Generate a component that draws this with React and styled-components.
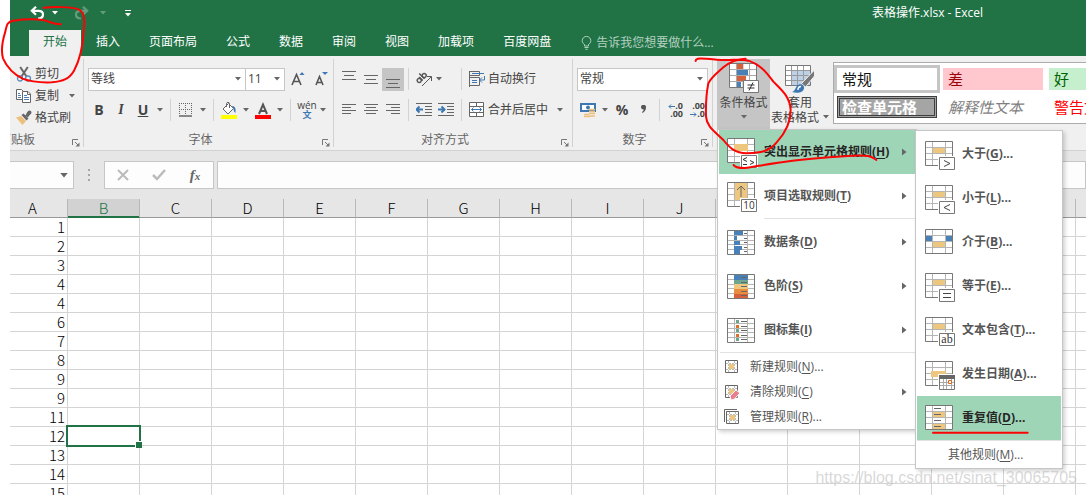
import React from 'react'
import styled, { createGlobalStyle, css } from 'styled-components'

const GlobalStyle = createGlobalStyle`
  * {
    box-sizing: border-box;
  }
  body {
    margin: 0;
    background: #fff;
  }
  body, button, input, select {
    font-family: 'Open Sans', 'Noto Sans CJK SC', sans-serif;
    font-size: 12px;
    line-height: 16px;
    color: #444;
  }
  button {
    margin: 0;
    padding: 0;
    border: 0;
    background: none;
    white-space: nowrap;
  }
  svg {
    display: block;
    flex: none;
  }
`

const Page = styled.div`
  position: relative;
  height: 100vh;
  padding-left: 10px;
  display: flex;
  flex-direction: column;
  overflow: hidden;
`

const Mark = styled.svg`
  position: absolute;
  left: ${(p) => p.$left}px;
  top: ${(p) => p.$top}px;
  z-index: 10;
  fill: none;
  stroke: #fb0404;
  stroke-width: 6;
  stroke-linecap: round;
  stroke-linejoin: round;
  pointer-events: none;
`

const Watermark = styled.div`
  position: absolute;
  right: 9px;
  bottom: 7px;
  z-index: 6;
  font-family: 'Liberation Sans', sans-serif;
  font-size: 16px;
  line-height: 20px;
  color: rgba(190, 190, 190, 0.6);
  pointer-events: none;
`

/* title bar and tabs */

const Header = styled.header`
  flex: none;
  background: #217346;
  color: #fff;
`

const TitleBar = styled.div`
  display: flex;
  align-items: center;
  height: 26px;
  padding: 0 103px 0 18px;
`

const QuickButton = styled.button`
  display: flex;
  align-items: center;
  justify-content: center;
  width: ${(p) => p.$w}px;
  height: 24px;
  color: #fff;
  opacity: ${(p) => (p.disabled ? 0.3 : 1)};
`

const Title = styled.h1`
  margin: 0 0 0 auto;
  font-size: 12px;
  font-weight: normal;
`

const Tabs = styled.nav`
  display: flex;
  align-items: stretch;
  gap: 1px;
  height: 30px;
  padding: 4px 0 0 19px;
`

const Tab = styled.button`
  padding: 0 14px 2px;
  color: ${(p) => (p.$active ? '#217346' : '#fff')};
  background: ${(p) => (p.$active ? '#f0f0f0' : 'transparent')};
`

const TellMe = styled.label`
  display: flex;
  align-items: center;
  gap: 4px;
  padding-left: 15px;
  color: #b3d0c0;
  input {
    width: 160px;
    padding: 0;
    border: 0;
    background: none;
    color: #fff;
  }
  input::placeholder {
    color: #b3d0c0;
    opacity: 1;
  }
`

/* ribbon */

const Ribbon = styled.div`
  flex: none;
  display: flex;
  height: 95px;
  padding-top: 3px;
  background: #f0f0f0;
  border-bottom: 1px solid #d2d2d2;
`

const Group = styled.section`
  position: relative;
  flex: none;
  display: flex;
  flex-direction: column;
  width: ${(p) => p.$w}px;
  height: 88px;
  padding: ${(p) => p.$pad || '8px 0 0 4px'};
  border-right: 1px solid #d2d2d2;
`

const GroupFooter = styled.div`
  display: flex;
  align-items: center;
  justify-content: ${(p) => (p.$clipped ? 'flex-end' : 'center')};
  height: 16px;
  margin: auto 0 -1px;
  padding-right: ${(p) => (p.$clipped ? 48 : 20)}px;
  overflow: hidden;
  white-space: nowrap;
  color: #666;
`

const Launcher = styled.button`
  position: absolute;
  right: 3px;
  bottom: 0;
`

const Row = styled.div`
  display: flex;
  align-items: center;
  height: 24px;
  margin-bottom: ${(p) => p.$below || 0}px;
`

const Tool = styled.button`
  flex: none;
  display: flex;
  align-items: center;
  justify-content: center;
  width: ${(p) => p.$w || 22}px;
  height: 23px;
  background: ${(p) => (p.$on ? '#c5c5c5' : 'transparent')};
`

const TextTool = styled.button`
  display: flex;
  align-items: center;
  gap: ${(p) => p.$gap || 3}px;
  height: 23px;
  padding-left: 7px;
`

const Letter = styled.span`
  font-size: 14px;
  font-weight: bold;
  line-height: 18px;
  ${(p) =>
    p.$italic &&
    css`
      font-family: 'Liberation Serif', serif;
      font-style: italic;
    `}
  ${(p) => p.$underline && 'text-decoration: underline;'}
`

const Sep = styled.span`
  flex: none;
  width: 1px;
  height: 22px;
  margin: 0 ${(p) => p.$m || 0}px 0 ${(p) => p.$before || p.$m || 0}px;
  background: #d2d2d2;
`

const SelectBox = styled.span`
  position: relative;
  display: flex;
  align-items: center;
  width: ${(p) => p.$w}px;
  height: 23px;
  margin-left: ${(p) => (p.$joined ? -1 : 0)}px;
  border: 1px solid #c6c6c6;
  background: #fff;
  select {
    flex: 1;
    min-width: 0;
    height: 21px;
    padding: 0 2px;
    border: 0;
    background: none;
    appearance: none;
  }
  svg {
    margin-right: 4px;
  }
`

const ClipTool = styled.button`
  display: flex;
  align-items: center;
  gap: 3px;
  height: 22px;
  padding-left: 6px;
`

const MarkBox = styled.span`
  padding-left: 7px;
`

const StylesGroup = styled.section`
  flex: 1;
  min-width: 0;
  display: flex;
  align-items: flex-start;
  padding-left: 4px;
`

const BigTool = styled.button`
  display: flex;
  flex-direction: column;
  align-items: center;
  width: ${(p) => p.$w}px;
  height: 70px;
  padding-top: 4px;
  line-height: 14px;
  background: ${(p) => (p.$on ? '#c5c5c5' : 'transparent')};
  svg {
    margin-bottom: 1px;
  }
  span {
    display: flex;
    align-items: center;
    gap: 4px;
    height: 15px;
  }
`

const Anchor = styled.div`
  position: relative;
  flex: none;
`

const Gallery = styled.div`
  flex: 1;
  min-width: 0;
  display: grid;
  grid-template-columns: repeat(3, 100px);
  grid-auto-rows: 22px;
  gap: 6px;
  height: 62px;
  margin: 3px 0 0 3px;
  padding: 5px 0 0 3px;
  overflow: hidden;
  border: 1px solid #ababab;
  border-right: 0;
  background: #fff;
`

const StyleCell = styled.button`
  position: relative;
  padding: 0 5px;
  text-align: left;
  font-size: 15px;
  line-height: 22px;
  color: ${(p) => p.$color};
  background: ${(p) => p.$bg || '#fff'};
  font-style: ${(p) => (p.$italic ? 'italic' : 'normal')};
  ${(p) =>
    p.$selected &&
    css`
      box-shadow: 0 0 0 3px #c5c5c5;
    `}
  ${(p) =>
    p.$check &&
    css`
      padding: 0 2px;
      border: 3px double #3f3f3f;
      font-weight: bold;
      line-height: 16px;
    `}
`

/* menus */

const Menu = styled.div`
  position: absolute;
  left: 0;
  top: 100%;
  z-index: 5;
  width: 200px;
  padding: 0 1px;
  border: 1px solid #c6c6c6;
  background: #fff;
  box-shadow: 2px 2px 4px rgba(0, 0, 0, 0.18);
`

const SubMenu = styled(Menu)`
  left: 197px;
  top: 0;
  width: 148px;
  padding: 1px;
`

const MenuItem = styled.button`
  position: relative;
  display: flex;
  align-items: center;
  width: 100%;
  height: ${(p) => (p.$small ? 25 : 44)}px;
  padding: 0 8px ${(p) => (p.$small ? 0 : 1)}px ${(p) => p.$indent || (p.$small ? 5 : 8)}px;
  gap: ${(p) => (p.$small ? 10 : 5)}px;
  font-weight: ${(p) => (p.$small ? 'normal' : 'bold')};
  color: ${(p) => (p.$active ? '#262626' : '#555')};
  background: ${(p) => (p.$active ? '#9fd5b7' : 'transparent')};
  u {
    text-underline-offset: 2px;
  }
  .arrow {
    margin-left: auto;
  }
`

const MenuLine = styled.hr`
  height: 1px;
  margin: 0 0 1px ${(p) => p.$inset || 0}px;
  border: 0;
  background: #e1e1e1;
`

/* formula bar */

const FormulaBar = styled.div`
  flex: none;
  display: flex;
  height: 48px;
  padding: 10px 0;
  background: #e6e6e6;
`

const Field = styled.div`
  display: flex;
  align-items: center;
  width: ${(p) => (p.$w ? `${p.$w}px` : 'auto')};
  flex: ${(p) => (p.$w ? 'none' : 1)};
  margin-left: ${(p) => p.$gap || 0}px;
  border: 1px solid #c6c6c6;
  border-left-width: ${(p) => (p.$open ? 0 : 1)}px;
  background: #fdfdfd;
  input {
    flex: 1;
    min-width: 0;
    border: 0;
    background: none;
  }
`

const Dots = styled.div`
  display: flex;
  flex-direction: column;
  align-items: center;
  justify-content: center;
  gap: 3px;
  width: 30px;
  i {
    width: 2px;
    height: 2px;
    background: #a6a6a6;
  }
`

const Fx = styled.span`
  font-family: 'Liberation Serif', serif;
  font-size: 15px;
  font-style: italic;
  font-weight: bold;
  color: #666;
  small {
    font-size: 11px;
  }
`

/* sheet */

const SheetArea = styled.main`
  flex: 1;
  min-height: 0;
  overflow: hidden;
`

const Sheet = styled.table`
  width: 1138px;
  table-layout: fixed;
  border-collapse: separate;
  border-spacing: 0;
  font-family: 'Noto Sans CJK SC', sans-serif;
  font-size: 15px;
  font-weight: 300;
  line-height: 18px;
  color: #000;
  th,
  td {
    height: 19px;
    padding: 0;
    white-space: nowrap;
  }
  td {
    position: relative;
    padding-right: 2px;
    text-align: right;
    border-right: 1px solid #d4d4d4;
    border-bottom: 1px solid #d4d4d4;
  }
`

const ColHead = styled.th`
  font-weight: 300;
  background: ${(p) => (p.$active ? '#d2d2d2' : '#e6e6e6')};
  color: ${(p) => (p.$active ? '#217346' : '#000')};
  border-right: 1px solid #b8b8b8;
  border-bottom: 1px solid ${(p) => (p.$active ? '#217346' : '#999')};
  box-shadow: ${(p) => (p.$active ? 'inset 0 -1px #217346' : 'none')};
  &:first-child {
    padding-right: 12px;
  }
`

const SelectedCell = styled.td`
  &::before {
    content: '';
    position: absolute;
    z-index: 1;
    inset: -2px;
    border: 2px solid #217346;
  }
  &::after {
    content: '';
    position: absolute;
    z-index: 2;
    right: -3px;
    bottom: -3px;
    width: 6px;
    height: 6px;
    background: #217346;
    box-shadow: -1px -1px #fff;
  }
`

const Caret = ({ color = '#666', size = 6 }) => (
  <svg width={size} height={size === 6 ? 4 : 5} viewBox="0 0 6 4" fill={color}>
    <path d="M0 0h6L3 3.5z" />
  </svg>
)

const Arrow = () => (
  <svg className="arrow" width="5" height="8" viewBox="0 0 5 8" fill="#666">
    <path d="M0 0.500l4.500 3.500L0 7.500z" />
  </svg>
)

const UndoIcon = ({ flip }) => (
  <svg
    width="15"
    height="14"
    viewBox="0 0 15 14"
    fill="none"
    stroke="#fff"
    strokeWidth="2.200"
  >
    <g transform={flip ? 'translate(15 0) scale(-1 1)' : undefined}>
      <path d="M6 0.800L1.800 4.800l4.200 4M2 4.800h6.500c3 0 4.500 1.600 4.500 3.800S11.500 12.500 8 12.500" />
    </g>
  </svg>
)

const BulbIcon = () => (
  <svg width="11" height="14" viewBox="0 0 11 14" fill="none" stroke="#b3d0c0">
    <path d="M3.500 10V8.500C2 7.500 1.200 6.300 1.200 4.700a4.300 4.300 0 0 1 8.600 0c0 1.600-.8 2.800-2.300 3.800V10zM3.500 11.500h4M4.500 13.300h2" />
  </svg>
)

const LauncherIcon = () => (
  <svg width="8" height="8" viewBox="0 0 8 8" fill="none" stroke="#777">
    <path d="M.5 6V.5H6M3 3l3 3" />
    <path d="M7.500 3.500v4h-4z" fill="#777" stroke="none" />
  </svg>
)

const CutIcon = () => (
  <svg width="16" height="16" viewBox="0 0 16 16" fill="none">
    <path d="M4.200 1l6.300 9.500M11.800 1L5.500 10.500" stroke="#666" strokeWidth="2" />
    <circle cx="4" cy="12.500" r="2.500" stroke="#5b8fbf" strokeWidth="1.300" />
    <circle cx="12" cy="12.500" r="2.500" stroke="#5b8fbf" strokeWidth="1.300" />
  </svg>
)

const CopyIcon = () => (
  <svg width="16" height="16" viewBox="0 0 16 16" fill="#fff" stroke="#666">
    <path d="M.5 1.500h5l2 2v8h-7z" />
    <path d="M2 5.500h2M2 7.500h3M2 9.500h3" stroke="#4a80b8" />
    <path d="M6.500 3.500h5.500l2.500 2.500v8.500h-8z" />
    <path d="M8 7.500h3M8 9.500h5M8 11.500h5" stroke="#4a80b8" />
    <path d="M11.500 3.500v3h3" fill="none" />
  </svg>
)

const BrushIcon = () => (
  <svg width="16" height="16" viewBox="0 0 16 16">
    <path d="M0 7.500L5 6l5 5-3.500 4z" fill="#edbf7c" />
    <path d="M5.500 5l2-1.500 5 5-2 2z" fill="#666" />
    <path d="M9 5.500c1.500-1 1.500-3 3-4.300s3.500-.2 3.500 1.300-2 2-3.500 5z" fill="#666" />
  </svg>
)

const GrowIcon = ({ down }) => (
  <svg width="16" height="16" viewBox="0 0 16 16">
    <path
      d={down ? 'M4 14L7.500 5.500L11 14M5.500 11.500h4.500' : 'M2 14L6.500 3.500L11 14M3.500 10.500h6'}
      fill="none"
      stroke="#555"
      strokeWidth="1.600"
    />
    <path d={down ? 'M10 1h6l-3 3z' : 'M9.500 4h5l-2.500-3z'} fill="#3e78b3" />
  </svg>
)

const BorderIcon = () => (
  <svg width="14" height="14" viewBox="0 0 14 14" fill="none" stroke="#666">
    <path d="M0 .5h14M0 6.500h14M.5 0v12M6.500 0v12M12.500 0v12" strokeDasharray="1 1" />
    <path d="M0 13h13" strokeWidth="1.500" />
  </svg>
)

const FillIcon = () => (
  <svg width="18" height="18" viewBox="0 0 18 18" fill="none" stroke="#666">
    <path d="M3 8l5.500-5.500 5 5L8 13z" fill="#fff" />
    <path d="M6.500 6V2.500c0-1.500 3-1.500 3 0V7" />
    <path d="M12 5c3 0 4 2 3.500 7-1.500-1-2-3-2-4.500z" fill="#3e78b3" stroke="none" />
    <path d="M1 14h16v4H1z" fill="#ff0" stroke="none" />
  </svg>
)

const FontColorIcon = () => (
  <svg width="16" height="18" viewBox="0 0 16 18" fill="none">
    <path d="M4 13L8 3.500 12 13M5.500 10h5" stroke="#555" strokeWidth="2" />
    <path d="M0 14h16v4H0z" fill="#f00" />
  </svg>
)

const Pinyin = styled.span`
  display: flex;
  flex-direction: column;
  align-items: center;
  font-size: 10px;
  line-height: 10px;
  b {
    font-size: 9px;
    line-height: 10px;
    color: #3e78b3;
  }
`

const LinesIcon = ({ lines, top = 0 }) => (
  <svg width="14" height="18" viewBox="0 0 14 18" stroke="#666">
    {lines.map(([x, w], i) => (
      <path key={i} d={`M${x} ${top + 0.5 + i * (lines.length > 3 ? 3 : 4)}h${w}`} />
    ))}
  </svg>
)

const OrientIcon = () => (
  <svg width="18" height="16" viewBox="0 0 18 16" fill="none" stroke="#555">
    <g transform="rotate(-45 6 7)" strokeWidth="1.400">
      <circle cx="3" cy="7.500" r="2" />
      <path d="M5.500 5v5M8 2.500V10" />
      <circle cx="10" cy="7.500" r="2" />
    </g>
    <path d="M7 15l9-9M12 5.500h4.500V10" />
  </svg>
)

const IndentIcon = ({ right }) => (
  <svg width="16" height="14" viewBox="0 0 16 14" fill="none" stroke="#666">
    <path d="M0 .5h16M9 3.500h7M9 6.500h7M9 9.500h7M0 12.500h16" />
    <path
      d={right ? 'M0 6.500h6M3.500 3.500l3 3-3 3' : 'M7 6.500H1M3.500 3.500l-3 3 3 3'}
      stroke="#3e78b3"
      strokeWidth="2"
    />
  </svg>
)

const WrapIcon = () => (
  <svg width="16" height="16" viewBox="0 0 16 16" fill="none" stroke="#666">
    <path d="M.5 0v16M0 .5h10.500v4H.5M0 6.500h10.500v8H.5" />
    <path d="M3 2.500h12M3 9.500h5M3 11.500h5M15.500 5v4H11M13 6.500L10.500 9l2.500 2.500" stroke="#3e78b3" />
  </svg>
)

const MergeIcon = () => (
  <svg width="16" height="16" viewBox="0 0 16 16" fill="#fff" stroke="#666">
    <path d="M.5.5h14v14H.5zM.5 4.500h14M.5 10.500h14M7.500.5v4M7.500 10.500v4" />
    <path d="M2.500 7.500h10M4.500 5.500l-2 2 2 2M10.500 5.500l2 2-2 2" stroke="#3e78b3" fill="none" />
  </svg>
)

const MoneyIcon = () => (
  <svg width="17" height="17" viewBox="0 0 17 17" fill="none">
    <path d="M1 2h14v7H1z" fill="#fff" stroke="#3e78b3" strokeWidth="2" />
    <circle cx="8" cy="5.500" r="2" fill="#3e78b3" />
    <path
      d="M9 7.500h6M9 9.500h6M9 11.500h6M4 12.500h5M4 14.500h6M9 14h6"
      stroke="#edbf7c"
      strokeWidth="1.600"
    />
  </svg>
)

const Decimals = styled.span`
  display: flex;
  flex-direction: column;
  align-items: flex-end;
  width: 16px;
  font-size: 9px;
  font-weight: bold;
  line-height: 8px;
  span {
    display: flex;
    align-items: center;
  }
`

const BlueArrow = ({ right }) => (
  <svg width="7" height="5" viewBox="0 0 7 5" fill="none" stroke="#3e78b3">
    <path d={right ? 'M0 2.500h6M4 .5l2 2-2 2' : 'M1 2.500h6M3 .5l-2 2 2 2'} />
  </svg>
)

const CondIcon = () => (
  <svg width="30" height="31" viewBox="0 0 30 31" fill="none">
    <path d="M.5.5h27v24H.5z" fill="#fff" stroke="#777" />
    <path d="M1 6.500h26M1 12.500h26M1 18.500h26M7.500 1v23M14 1v23M20.500 1v23" stroke="#aaa" />
    <path d="M8 1h6v5H8zM8 13h9v5H8z" fill="#d65f3c" />
    <path d="M8 7h11v5H8zM8 19h4v5H8z" fill="#4a80b8" />
    <path d="M14.500 17.500h15v12h-15z" fill="#fff" stroke="#777" />
    <path d="M18.500 22h7M18.500 25h7M24 19.500l-4 8" stroke="#333" />
  </svg>
)

const TableIcon = () => (
  <svg width="30" height="31" viewBox="0 0 30 31" fill="none">
    <path d="M.5 2.500h25v20H.5z" fill="#fff" stroke="#777" />
    <path d="M7 8h18v14H7z" fill="#bcd0e8" />
    <path d="M1 7.500h24M1 12.500h24M1 17.500h24M6.500 3v19M12.500 3v19M18.500 3v19" stroke="#999" />
    <path d="M29.500 7v6l-9 11-4-3.500z" fill="#777" stroke="#f0f0f0" />
    <path d="M7 29c4-1 3-6 7-7.500 3-.8 5.500 1.500 5 4C18 30 12 30.500 7 29z" fill="#3e78b3" />
    <path d="M13 27c0-2 1-3.500 3-3.500" stroke="#fff" strokeWidth="1.400" />
  </svg>
)

const SANS = 'Open Sans, sans-serif'

const badges = {
  le: (
    <path d="M20 21.500l-4 2 4 2M16 28.500h4M23 24.500l4 2-4 2" stroke="#333" />
  ),
  ten: (
    <text x="22" y="29" fontSize="10" fontFamily={SANS} textAnchor="middle">
      10
    </text>
  ),
  gt: <path d="M19 22.500l6 3-6 3" />,
  lt: <path d="M25 22.500l-6 3 6 3" />,
  eq: <path d="M18 23.500h8M18 27.500h8" />,
  ab: (
    <text x="22" y="29" fontSize="12" fontFamily="Liberation Serif, serif" textAnchor="middle">
      ab
    </text>
  )
}

const RuleIcon = ({ fills = [], badge, marks, top = 3, rowLines, children }) => {
  const isText = badge === 'ab' || badge === 'ten'
  return (
    <svg width="32" height="32" viewBox="0 0 32 32" fill="none" fontWeight="400">
      <g transform={`translate(0 ${top})`}>
        <path d="M.5.5h27v24H.5z" fill="#fff" />
        <path d={rowLines || 'M1 6.500h26M1 12.500h26M1 18.500h26'} stroke="#b5b5b5" />
        <path d="M7.500 1v23M20.500 1v23" stroke="#b5b5b5" />
        {fills.map(([x, y, w, h, color]) => (
          <path key={`${x}-${y}`} d={`M${x} ${y}h${w}v${h}h${-w}z`} fill={color || '#edc77f'} />
        ))}
        {marks && <path d={marks} stroke="#666" />}
        <path d="M.5.5h27v24H.5z" stroke="#777" />
      </g>
      {badge && (
        <>
          <path d="M13 18h18v14H13z" fill="#fff" />
          <path d="M14.500 19.500h15v12h-15z" fill="#fff" stroke="#777" />
          <g stroke={isText ? 'none' : '#444'} fill={isText ? '#333' : 'none'}>
            {badges[badge]}
          </g>
        </>
      )}
      {children}
    </svg>
  )
}

const BLUE = '#4a80b8'
const GREEN = '#6ea58e'
const FIVE_ROWS = 'M1 5.500h26M1 10.500h26M1 14.500h26M1 19.500h26'

const BarsIcon = () => (
  <RuleIcon
    top={4}
    rowLines={FIVE_ROWS}
    fills={[
      [7, 1, 9, 4, BLUE],
      [7, 6, 3, 4, BLUE],
      [7, 11, 6, 4, BLUE],
      [7, 16, 8, 4, BLUE],
      [7, 20, 6, 4, BLUE]
    ]}
    marks="M17 3.500h3M17 8.500h3M17 12.500h3M17 17.500h3M17 21.500h3"
  />
)

const ScaleIcon = () => (
  <RuleIcon
    top={4}
    rowLines={FIVE_ROWS}
    fills={[
      [7, 1, 14, 5, BLUE],
      [7, 6, 14, 4, GREEN],
      [7, 10, 14, 5, '#edc77f'],
      [7, 15, 14, 5, '#e88d3e'],
      [7, 20, 14, 4, '#d65f3c']
    ]}
    marks="M14 3.500h6M14 8.500h6M14 12.500h6M14 17.500h6M14 21.500h6"
  />
)

const SetsIcon = () => (
  <RuleIcon
    top={4}
    rowLines={FIVE_ROWS}
    fills={[
      [9, 2, 3, 3, GREEN],
      [9, 7, 3, 3, '#e07020'],
      [9, 11, 3, 3, GREEN],
      [9, 16, 3, 3, '#e07020'],
      [9, 20, 3, 3, GREEN]
    ]}
    marks="M14 3.500h6M14 8.500h6M14 12.500h6M14 17.500h6M14 21.500h6"
  />
)

const SmallRuleIcon = ({ kind }) => (
  <svg width="16" height="16" viewBox="0 0 16 16" fill="none">
    {kind === 'manage' && <path d="M.5 13V.5H13" stroke="#666" />}
    <g transform={kind === 'manage' ? 'translate(1 1)' : undefined}>
      <path d="M1.500 1.500h12v12h-12z" fill="#fff" stroke="#666" />
      <path d="M4.500 2v11M10.500 2v11M2 4.500h11M2 10.500h11" stroke="#bbb" strokeDasharray="2 1" />
      <path d="M5 5h5v5H5z" fill="#edc77f" />
    </g>
    {kind === 'clear' && (
      <path d="M6 12l6-6 4 3-6 6.500-3 .5z" fill="#e8808f" stroke="#fff" />
    )}
  </svg>
)

const tabs = ['开始', '插入', '页面布局', '公式', '数据', '审阅', '视图', '加载项', '百度网盘']

const rules = [
  {
    text: '突出显示单元格规则',
    hotkey: 'H',
    active: true,
    icon: <RuleIcon top={2} badge="le" fills={[[7, 6, 14, 7]]} />
  },
  {
    text: '项目选取规则',
    hotkey: 'T',
    icon: (
      <RuleIcon
        top={2}
        badge="ten"
        fills={[[8, 1, 12, 17]]}
        marks="M14 15V4M10 8l4-4 4 4"
      />
    ),
    line: 45
  },
  { text: '数据条', hotkey: 'D', icon: <BarsIcon /> },
  { text: '色阶', hotkey: 'S', icon: <ScaleIcon /> },
  { text: '图标集', hotkey: 'I', icon: <SetsIcon />, line: 1 }
]

const manageRules = [
  { text: '新建规则', hotkey: 'N', kind: 'new', dots: true },
  { text: '清除规则', hotkey: 'C', kind: 'clear' },
  { text: '管理规则', hotkey: 'R', kind: 'manage', dots: true }
]

const highlightRules = [
  { text: '大于', hotkey: 'G', icon: <RuleIcon badge="gt" fills={[[8, 7, 12, 5]]} /> },
  { text: '小于', hotkey: 'L', icon: <RuleIcon badge="lt" fills={[[8, 7, 12, 5]]} /> },
  {
    text: '介于',
    hotkey: 'B',
    icon: (
      <RuleIcon
        fills={[
          [1, 7, 6, 5, BLUE],
          [21, 7, 6, 5, BLUE],
          [8, 13, 12, 5]
        ]}
      />
    )
  },
  { text: '等于', hotkey: 'E', icon: <RuleIcon badge="eq" fills={[[8, 7, 12, 5]]} /> },
  { text: '文本包含', hotkey: 'T', icon: <RuleIcon badge="ab" fills={[[8, 7, 12, 5]]} /> },
  {
    text: '发生日期',
    hotkey: 'A',
    icon: (
      <RuleIcon fills={[[6, 10, 15, 6]]}>
        <path d="M13 16h18v16H13z" fill="#fff" />
        <path d="M14.500 17.500h15v14h-15z" stroke="#777" />
        <path d="M14 17h16v4H14z" fill="#666" />
        <path d="M15 24.500h14M15 27.500h14M18.500 21v10M21.500 21v10M26.500 21v10" stroke="#aaa" />
        <path d="M23.500 22.500h3v3h-3z" fill="#fff" stroke="#d86a1a" />
      </RuleIcon>
    )
  },
  {
    text: '重复值',
    hotkey: 'D',
    active: true,
    icon: (
      <RuleIcon
        fills={[
          [8, 7, 12, 5],
          [8, 19, 12, 5]
        ]}
        marks="M9 3.500h7M9 9.500h7M9 15.500h7M9 21.500h7"
      />
    )
  }
]

const rowNumbers = [1, 2, 3, 4, 4, 6, 7, 8, 9, 9, 11, 12, 13, 14, 15]
const columns = 'ABCDEFGHIJKLMNOP'.split('')

const Hotkey = ({ text, hotkey, dots }) => (
  <span>
    {text}(<u>{hotkey}</u>){dots && '...'}
  </span>
)

const DropDown = ({ w = 14, label }) => (
  <Tool $w={w} aria-label={label}>
    <Caret />
  </Tool>
)

const Footer = ({ children, clipped }) => (
  <>
    <GroupFooter $clipped={clipped}>{children}</GroupFooter>
    <Launcher aria-label={`${children}设置`}>
      <LauncherIcon />
    </Launcher>
  </>
)

const Picker = ({ w, label, value, joined }) => (
  <SelectBox $w={w} $joined={joined}>
    <select aria-label={label} defaultValue={value}>
      <option>{value}</option>
    </select>
    <Caret />
  </SelectBox>
)

const ClipboardGroup = () => (
  <Group $w={74} $pad="4px 0 0">
    <ClipTool>
      <CutIcon />
      剪切
    </ClipTool>
    <ClipTool>
      <CopyIcon />
      复制
      <MarkBox>
        <Caret />
      </MarkBox>
    </ClipTool>
    <ClipTool>
      <BrushIcon />
      格式刷
    </ClipTool>
    <Footer clipped>剪贴板</Footer>
  </Group>
)

const FontGroup = () => (
  <Group $w={250}>
    <Row $below={7}>
      <Picker w={158} label="字体" value="等线" />
      <Picker w={40} label="字号" value="11" joined />
      <Tool $w={26} aria-label="增大字号">
        <GrowIcon />
      </Tool>
      <Tool $w={18} aria-label="减小字号">
        <GrowIcon down />
      </Tool>
    </Row>
    <Row>
      <Tool>
        <Letter>B</Letter>
      </Tool>
      <Tool>
        <Letter $italic>I</Letter>
      </Tool>
      <Tool>
        <Letter $underline>U</Letter>
      </Tool>
      <DropDown w={12} label="下划线" />
      <Sep $m={4} />
      <Tool aria-label="边框">
        <BorderIcon />
      </Tool>
      <DropDown w={12} label="边框样式" />
      <Sep $m={4} />
      <Tool aria-label="填充颜色">
        <FillIcon />
      </Tool>
      <DropDown w={12} label="填充颜色列表" />
      <Tool aria-label="字体颜色">
        <FontColorIcon />
      </Tool>
      <DropDown w={12} label="字体颜色列表" />
      <Sep $m={4} />
      <Tool $w={24}>
        <Pinyin>
          wén<b>文</b>
        </Pinyin>
      </Tool>
      <DropDown w={8} label="拼音" />
    </Row>
    <Footer>字体</Footer>
  </Group>
)

const wide = [0, 14]
const mid = [2, 10]

const AlignGroup = () => (
  <Group $w={239}>
    <Row $below={7}>
      <Tool aria-label="顶端对齐">
        <LinesIcon lines={[wide, mid, wide]} top={1} />
      </Tool>
      <Tool aria-label="垂直居中">
        <LinesIcon lines={[wide, mid, wide]} top={5} />
      </Tool>
      <Tool $on aria-label="底端对齐">
        <LinesIcon lines={[wide, mid, wide]} top={9} />
      </Tool>
      <Sep $m={4} />
      <Tool aria-label="方向">
        <OrientIcon />
      </Tool>
      <DropDown w={8} label="方向列表" />
      <Sep $before={18} />
      <TextTool>
        <WrapIcon />
        自动换行
      </TextTool>
    </Row>
    <Row>
      <Tool aria-label="左对齐">
        <LinesIcon top={3} lines={[wide, [0, 9], wide, [0, 9]]} />
      </Tool>
      <Tool aria-label="居中">
        <LinesIcon top={3} lines={[wide, mid, wide, mid]} />
      </Tool>
      <Tool aria-label="右对齐">
        <LinesIcon top={3} lines={[wide, [5, 9], wide, [5, 9]]} />
      </Tool>
      <Sep $m={4} />
      <Tool aria-label="减少缩进量">
        <IndentIcon />
      </Tool>
      <Tool aria-label="增加缩进量">
        <IndentIcon right />
      </Tool>
      <Sep $before={4} />
      <TextTool>
        <MergeIcon />
        合并后居中
      </TextTool>
      <DropDown w={24} label="合并" />
    </Row>
    <Footer>对齐方式</Footer>
  </Group>
)

const NumberGroup = () => (
  <Group $w={140}>
    <Row $below={7}>
      <Picker w={131} label="数字格式" value="常规" />
    </Row>
    <Row>
      <Tool aria-label="会计数字格式">
        <MoneyIcon />
      </Tool>
      <DropDown w={12} label="货币" />
      <Tool>
        <Letter>%</Letter>
      </Tool>
      <Tool aria-label="千位分隔">
        <svg width="6" height="10" viewBox="0 0 6 10" fill="#555">
          <path d="M0 2a2.400 2.400 0 0 1 5 .5C5 5 3.500 7 1.500 8l-.5-1c1-.7 1.700-1.500 1.700-2.500C1 4.600 0 3.700 0 2z" />
        </svg>
      </Tool>
      <Sep $m={4} />
      <Tool>
        <Decimals>
          <span>
            <BlueArrow />
            .0
          </span>
          <span>.00</span>
        </Decimals>
      </Tool>
      <Tool>
        <Decimals>
          <span>.00</span>
          <span>
            <BlueArrow right />
            .0
          </span>
        </Decimals>
      </Tool>
    </Row>
    <Footer>数字</Footer>
  </Group>
)

const RulesMenu = () => (
  <Menu role="menu">
    {rules.map((rule) => (
      <React.Fragment key={rule.hotkey}>
        <MenuItem role="menuitem" $active={rule.active}>
          {rule.icon}
          <Hotkey {...rule} />
          <Arrow />
        </MenuItem>
        {rule.line && <MenuLine $inset={rule.line} />}
      </React.Fragment>
    ))}
    {manageRules.map((rule) => (
      <MenuItem key={rule.hotkey} role="menuitem" $small>
        <SmallRuleIcon kind={rule.kind} />
        <Hotkey {...rule} />
        {rule.kind === 'clear' && <Arrow />}
      </MenuItem>
    ))}
    <Mark $left={10} $top={20} width="160" height="30" viewBox="50 70 480 90">
      <path d="M67 115C70 122 82 124 100 124C125 122 150 115 200 108S340 92 410 88S480 90 495 100" />
    </Mark>
    <SubMenu role="menu">
      {highlightRules.map((rule) => (
        <MenuItem key={rule.hotkey} role="menuitem" $active={rule.active}>
          {rule.icon}
          <Hotkey {...rule} dots />
        </MenuItem>
      ))}
      <MenuLine />
      <MenuItem role="menuitem" $small $indent={31}>
        <Hotkey text="其他规则" hotkey="M" dots />
      </MenuItem>
      <Mark $left={15} $top={297} width="102" height="10" viewBox="0 0 306 30">
        <path d="M6 14H290" />
      </Mark>
    </SubMenu>
  </Menu>
)

const App = () => (
  <Page>
    <GlobalStyle />
    <Header>
      <TitleBar>
        <QuickButton $w={18} aria-label="撤消">
          <UndoIcon />
        </QuickButton>
        <QuickButton $w={18} aria-label="撤消列表">
          <Caret color="#fff" />
        </QuickButton>
        <QuickButton $w={34} disabled aria-label="恢复">
          <UndoIcon flip />
        </QuickButton>
        <QuickButton $w={10} disabled aria-label="恢复列表">
          <Caret color="#fff" />
        </QuickButton>
        <QuickButton $w={40} aria-label="自定义快速访问工具栏">
          <svg width="6" height="7" viewBox="0 0 6 7" fill="#fff">
            <path d="M0 0h6v1H0zM0 3h6L3 6.500z" />
          </svg>
        </QuickButton>
        <Title>表格操作.xlsx - Excel</Title>
      </TitleBar>
      <Tabs>
        {tabs.map((tab, idx) => (
          <Tab key={tab} $active={idx === 0}>
            {tab}
          </Tab>
        ))}
        <TellMe>
          <BulbIcon />
          <input aria-label="告诉我" placeholder="告诉我您想要做什么..." />
        </TellMe>
      </Tabs>
    </Header>
    <Mark $left={0} $top={0} width="100" height="95" viewBox="0 0 300 285">
      <path d="M131 23C160 20 215 20 235 28C256 38 254 60 251 95C248 140 240 180 222 212C208 236 190 244 155 247C120 248 90 245 68 236C40 222 20 200 9 175C2 150 8 120 16 95C20 75 22 65 40 62C75 57 110 57 133 61C150 65 158 73 183 73" />
    </Mark>

    <Ribbon>
      <ClipboardGroup />
      <FontGroup />
      <AlignGroup />
      <NumberGroup />
      <StylesGroup>
        <Anchor>
          <BigTool $w={53} $on aria-haspopup="menu">
            <CondIcon />
            <span>条件格式</span>
            <span>
              <Caret />
            </span>
          </BigTool>
          <RulesMenu />
          <Mark $left={-27} $top={-9} width="110" height="110" viewBox="390 -15 330 330">
            <path d="M407 18C407 8 425 10 470 14S540 10 565 17C600 30 615 45 640 80C665 105 690 125 692 165C692 200 680 230 650 262C625 292 600 293 560 295C525 293 510 280 490 255C465 230 440 215 438 185C437 150 438 120 445 85C455 65 470 55 490 37C510 20 530 12 557 11" />
          </Mark>
        </Anchor>
        <BigTool $w={60}>
          <TableIcon />
          <span>套用</span>
          <span>
            表格格式
            <Caret />
          </span>
        </BigTool>
        <Gallery>
          <StyleCell $color="#111" $selected>
            常规
          </StyleCell>
          <StyleCell $color="#9c0006" $bg="#ffc7ce">
            差
          </StyleCell>
          <StyleCell $color="#006100" $bg="#c6efce">
            好
          </StyleCell>
          <StyleCell $color="#fff" $bg="#a5a5a5" $check>
            检查单元格
          </StyleCell>
          <StyleCell $color="#7f7f7f" $italic>
            解释性文本
          </StyleCell>
          <StyleCell $color="#f00">警告文本</StyleCell>
        </Gallery>
      </StylesGroup>
    </Ribbon>

    <FormulaBar>
      <Field $w={64} $open>
        <input aria-label="名称框" />
        <QuickButton $w={18} aria-label="名称列表">
          <Caret size={8} />
        </QuickButton>
      </Field>
      <Dots>
        <i />
        <i />
        <i />
      </Dots>
      <Field $w={110}>
        <Tool $w={36} aria-label="取消">
          <svg width="12" height="12" viewBox="0 0 12 12" stroke="#bbb" strokeWidth="2">
            <path d="M1 1l10 10M11 1L1 11" />
          </svg>
        </Tool>
        <Tool $w={36} aria-label="输入">
          <svg width="14" height="12" viewBox="0 0 14 12" fill="none" stroke="#bbb" strokeWidth="2.500">
            <path d="M1 6l4 4L13 1" />
          </svg>
        </Tool>
        <Tool $w={36} aria-label="插入函数">
          <Fx>
            f<small>x</small>
          </Fx>
        </Tool>
      </Field>
      <Field $gap={3}>
        <input aria-label="编辑栏" />
      </Field>
    </FormulaBar>

    <SheetArea>
      <Sheet>
        <colgroup>
          {columns.map((col, idx) => (
            <col key={col} width={idx === 0 ? 58 : 72} />
          ))}
        </colgroup>
        <thead>
          <tr>
            {columns.map((col) => (
              <ColHead key={col} scope="col" $active={col === 'B'}>
                {col}
              </ColHead>
            ))}
          </tr>
        </thead>
        <tbody>
          {rowNumbers.map((value, idx) => (
            <tr key={idx}>
              {columns.map((col) => {
                const Cell = col === 'B' && idx === 11 ? SelectedCell : 'td'
                return <Cell key={col}>{col === 'A' && value}</Cell>
              })}
            </tr>
          ))}
        </tbody>
      </Sheet>
    </SheetArea>
    <Watermark>https://blog.csdn.net/sinat_30065705</Watermark>
  </Page>
)

export default App
